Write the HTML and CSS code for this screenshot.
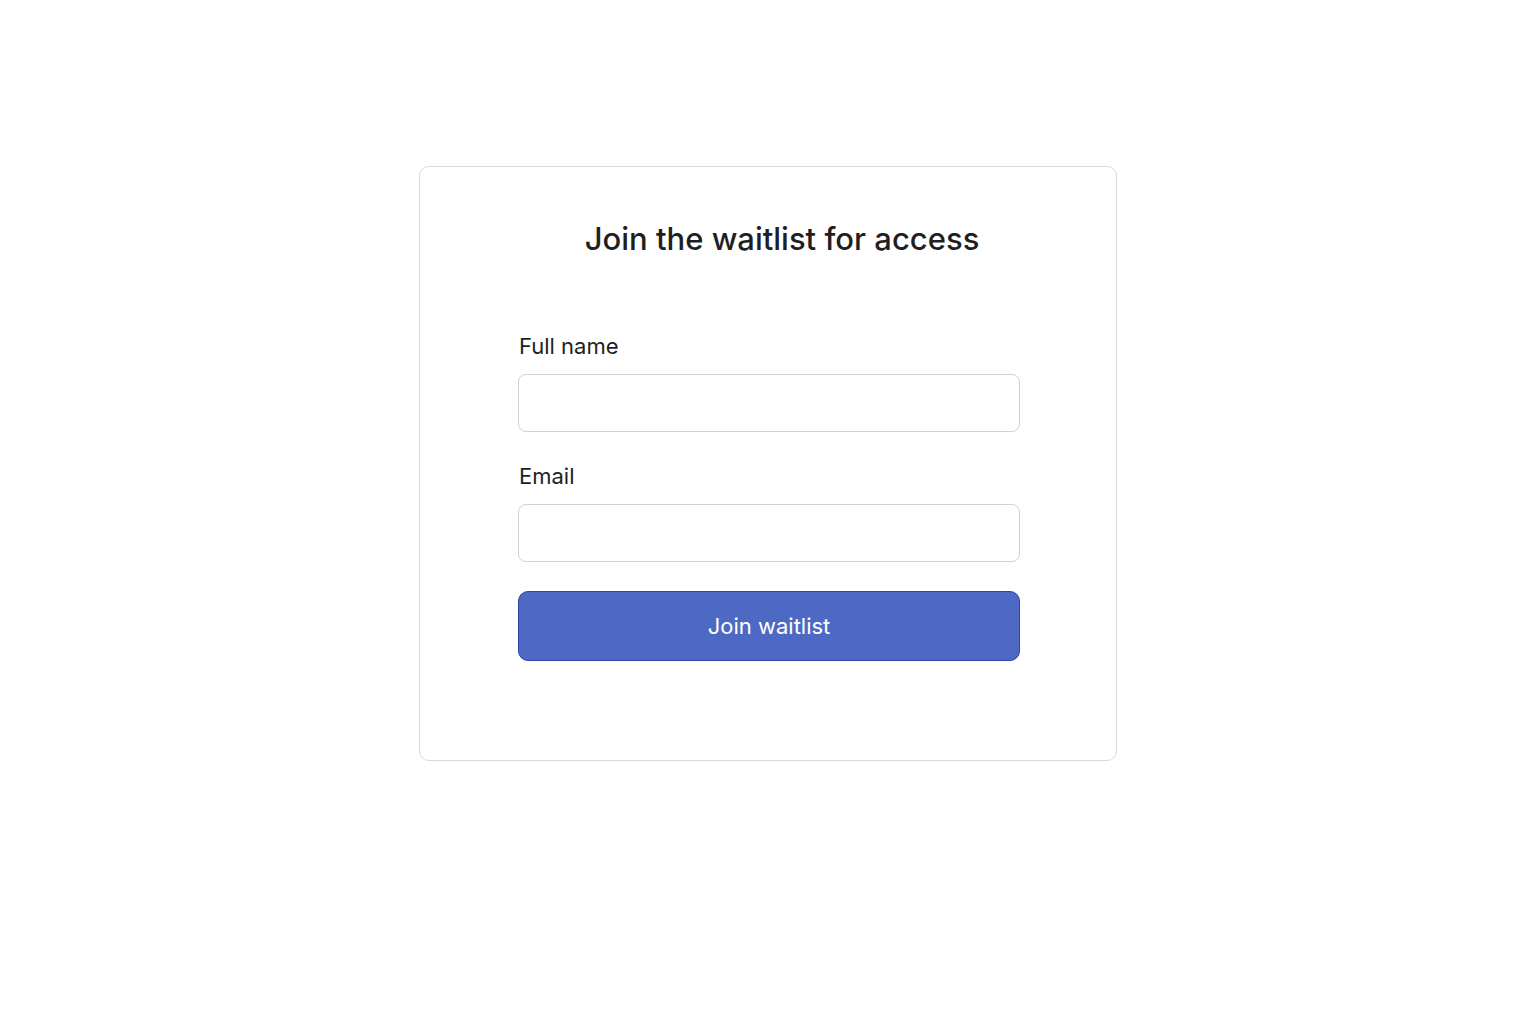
FILE: index.html
```html
<!DOCTYPE html>
<html lang="en">
<head>
  <meta charset="UTF-8" />
  <title>Join the waitlist</title>
  <meta name="viewport" content="width=device-width, initial-scale=1.0">
  <link rel="stylesheet" href="styles.css">
</head>
<body>
  <div class="card">
    <h1 class="title">Join the waitlist for access</h1>

    <form class="form" onsubmit="return false">
      <div class="field">
        <label for="fullname">Full name</label>
        <input type="text" id="fullname">
      </div>
      <div class="field">
        <label for="email">Email</label>
        <input type="email" id="email">
      </div>
      <button type="submit" class="join-btn">Join waitlist</button>
    </form>
  </div>
</body>
</html>
```

FILE: styles.css
```css
body {
  background: #ffffff;
  color: #1f1f1f;
  font-family: Inter, "Noto Sans", sans-serif;
  margin: 0;
  padding-top: 166px;
}
.card {
  width: 698px;
  box-sizing: border-box;
  margin: 0 auto;
  border: 1px solid #d9d9d9;
  border-radius: 10px;
  padding: 54px 0 99px;
}
.title {
  margin: 0;
  padding-left: 28px;
  text-align: center;
  font-size: 31px;
  line-height: 36px;
  font-weight: 500;
  color: #1f1f1f;
}
.form {
  width: 502px;
  margin: 75px auto 0;
  display: flex;
  flex-direction: column;
  gap: 30px;
  position: relative;
  left: 1px;
}
.field {
  display: flex;
  flex-direction: column;
  gap: 14px;
}
.field label {
  font-size: 22px;
  line-height: 28px;
  color: #1f1f1f;
  padding-left: 1px;
}
.field input {
  height: 58px;
  box-sizing: border-box;
  border: 1px solid #d2d2d2;
  border-radius: 8px;
  padding: 0 16px;
  font-size: 18px;
  font-family: inherit;
}
.join-btn {
  height: 70px;
  margin-top: -1px;
  border: 1px solid #2c43a8;
  border-radius: 10px;
  background: #4e69c4;
  color: #ffffff;
  font-family: inherit;
  font-size: 22px;
  cursor: pointer;
}
```
